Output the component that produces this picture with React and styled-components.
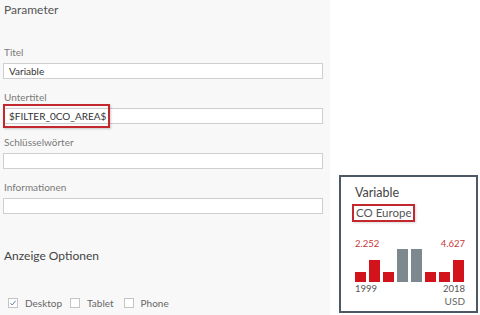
import React from 'react';
import styled, { createGlobalStyle } from 'styled-components';

const GlobalStyle = createGlobalStyle`
  html, body {
    margin: 0;
    padding: 0;
    background: #ffffff;
    font-family: Lato, "Open Sans", "Liberation Sans", sans-serif;
  }
`;

// whole screen: settings panel + preview area
const Page = styled.div`
  display: flex;
  width: 480px;
  height: 315px;
  overflow: hidden;
`;

// grey settings panel on the left
const Panel = styled.div`
  width: 320px;
  height: 100%;
  padding: 1px 7px 0 3px;
  background-color: #f8f8f8;
  display: flex;
  flex-direction: column;
`;

const PanelTitle = styled.div`
  font-size: 12px;
  line-height: 18px;
  color: #555;
  padding-left: 1px;
`;

const Field = styled.div`
  position: relative;
  display: flex;
  flex-direction: column;
  gap: 4px;
  margin-top: ${p => p.$top}px;
`;

const Label = styled.label`
  font-size: 10px;
  line-height: 14px;
  color: #7a7a7a;
  padding-left: 1px;
`;

const Input = styled.div`
  box-sizing: border-box;
  height: 16px;
  border: 1px solid #cfcfcf;
  background: #fff;
  font-size: 10px;
  line-height: 14px;
  color: #333;
  padding-left: 5px;
`;

// red annotation box drawn over the subtitle input
const Highlight = styled.div`
  position: absolute;
  left: 0;
  bottom: -4px;
  width: 107px;
  height: 24px;
  box-sizing: border-box;
  border: 2px solid #c3282f;
  box-shadow: 1px 1px 2px rgba(0, 0, 0, 0.2);
  pointer-events: none;
`;

const SectionTitle = styled.div`
  margin-top: 33px;
  font-size: 12px;
  line-height: 18px;
  color: #444;
  padding-left: 1px;
`;

const CheckRow = styled.div`
  display: flex;
  align-items: center;
  margin-top: 31px;
  padding-left: 5px;
  height: 14px;
`;

const Check = styled.span`
  display: inline-flex;
  align-items: center;
  gap: 7px;
  margin-right: ${p => p.$gap}px;
  font-size: 10px;
  color: #666;
`;

const Box = styled.span`
  box-sizing: border-box;
  width: 10px;
  height: 10px;
  border: 1px solid #c4c4c4;
  background: #fff;
  display: inline-flex;
  align-items: center;
  justify-content: center;
`;

// white preview area with the KPI tile
const Preview = styled.div`
  flex: 1;
  padding: 175px 0 0 9px;
`;

const Tile = styled.div`
  box-sizing: border-box;
  width: 139px;
  height: 138px;
  border: 2px solid #4b5a66;
  padding: 7px 11px 0 14px;
  display: flex;
  flex-direction: column;
`;

const TileTitle = styled.div`
  font-size: 12.5px;
  line-height: 18px;
  color: #444;
`;

const Subtitle = styled.div`
  align-self: flex-start;
  margin-left: -3px;
  margin-top: 2px;
  border: 2px solid #c3282f;
  padding: 0 2px;
  font-size: 11.5px;
  line-height: 14px;
  color: #555;
  box-shadow: 1px 1px 2px rgba(0, 0, 0, 0.15);
`;

const ValueRow = styled.div`
  display: flex;
  justify-content: space-between;
  margin-top: ${p => p.$top}px;
  font-size: 9.5px;
  line-height: 12px;
  color: ${p => p.$color || '#555'};
`;

const Bars = styled.div`
  display: flex;
  align-items: flex-end;
  gap: 3px;
  height: 33px;
  margin-top: -1px;
`;

const Bar = styled.div`
  width: 11px;
  height: ${p => p.$h}px;
  background-color: ${p => (p.$grey ? '#7e898f' : '#d3131c')};
`;

const Unit = styled.div`
  text-align: right;
  font-size: 10px;
  line-height: 12px;
  color: #666;
`;

const bars = [
  { h: 10 },
  { h: 22 },
  { h: 10 },
  { h: 33, grey: true },
  { h: 33, grey: true },
  { h: 10 },
  { h: 10 },
  { h: 22 },
];

const CheckMark = () => (
  <svg width="8" height="8" viewBox="0 0 8 8">
    <path d="M1.5 4.2 L3.2 6 L6.6 1.8" fill="none" stroke="#5a7fa8" strokeWidth="1" />
  </svg>
);

export default function App() {
  return (
    <>
      <GlobalStyle />
      <Page>
        <Panel>
          <PanelTitle>Parameter</PanelTitle>
          <Field $top={26}>
            <Label>Titel</Label>
            <Input>Variable</Input>
          </Field>
          <Field $top={11}>
            <Label>Untertitel</Label>
            <Input>$FILTER_0CO_AREA$</Input>
            <Highlight />
          </Field>
          <Field $top={11}>
            <Label>Schlüsselwörter</Label>
            <Input />
          </Field>
          <Field $top={11}>
            <Label>Informationen</Label>
            <Input />
          </Field>
          <SectionTitle>Anzeige Optionen</SectionTitle>
          <CheckRow>
            <Check $gap={8}>
              <Box><CheckMark /></Box>
              Desktop
            </Check>
            <Check $gap={10}>
              <Box />
              Tablet
            </Check>
            <Check $gap={0}>
              <Box />
              Phone
            </Check>
          </CheckRow>
        </Panel>
        <Preview>
          <Tile>
            <TileTitle>Variable</TileTitle>
            <Subtitle>CO Europe</Subtitle>
            <ValueRow $top={16} $color="#c7383a">
              <span>2.252</span>
              <span>4.627</span>
            </ValueRow>
            <Bars>
              {bars.map((b, i) => (
                <Bar key={i} $h={b.h} $grey={b.grey} />
              ))}
            </Bars>
            <ValueRow $top={1}>
              <span>1999</span>
              <span>2018</span>
            </ValueRow>
            <Unit>USD</Unit>
          </Tile>
        </Preview>
      </Page>
    </>
  );
}
